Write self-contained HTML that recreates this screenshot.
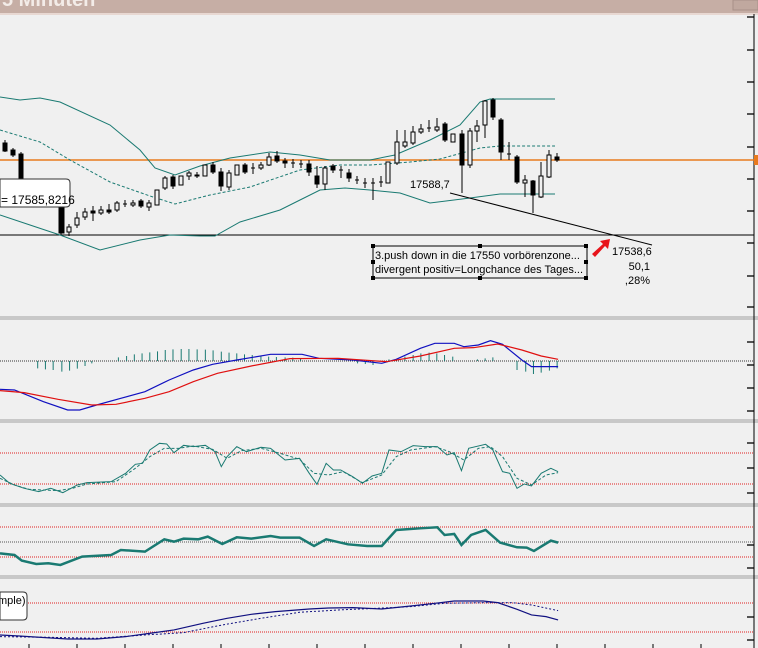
<!DOCTYPE html>
<html><head><meta charset="utf-8"><style>
html,body{margin:0;padding:0;width:758px;height:648px;overflow:hidden;background:#f0f0f0;font-family:"Liberation Sans",sans-serif}
</style></head><body>
<svg width="758" height="648" viewBox="0 0 758 648" xmlns="http://www.w3.org/2000/svg" style="position:absolute;left:0;top:0">
<rect x="0" y="0" width="758" height="648" fill="#f0f0f0"/>
<rect x="0" y="0" width="758" height="14" fill="#c6aea5"/>
<rect x="0" y="13" width="758" height="2" fill="#e8d8d2"/>
<text x="2" y="6" font-size="20" font-weight="bold" fill="#f3ece8" font-family="Liberation Sans">5 Minuten</text>
<rect x="733" y="0" width="25" height="10" fill="#c0a89f" stroke="#a89088"/>
<!-- separators -->
<rect x="0" y="316" width="758" height="4" fill="#c8c8c8"/>
<rect x="0" y="419" width="758" height="4" fill="#c8c8c8"/>
<rect x="0" y="503" width="758" height="4" fill="#c8c8c8"/>
<rect x="0" y="575" width="758" height="4" fill="#c8c8c8"/>
<!-- axis -->
<line x1="754" y1="14" x2="754" y2="648" stroke="#000"/>
<g stroke="#000" stroke-width="1.3">
<line x1="747" y1="17" x2="754" y2="17"/><line x1="747" y1="50" x2="754" y2="50"/><line x1="747" y1="82" x2="754" y2="82"/><line x1="747" y1="114" x2="754" y2="114"/><line x1="747" y1="147" x2="754" y2="147"/><line x1="747" y1="179" x2="754" y2="179"/><line x1="747" y1="211" x2="754" y2="211"/><line x1="747" y1="243" x2="754" y2="243"/><line x1="747" y1="276" x2="754" y2="276"/><line x1="747" y1="307" x2="754" y2="307"/>
<line x1="747" y1="342" x2="754" y2="342"/><line x1="747" y1="365" x2="754" y2="365"/><line x1="747" y1="388" x2="754" y2="388"/><line x1="747" y1="411" x2="754" y2="411"/>
<line x1="747" y1="443" x2="754" y2="443"/><line x1="747" y1="468" x2="754" y2="468"/><line x1="747" y1="493" x2="754" y2="493"/>
<line x1="747" y1="545" x2="754" y2="545"/><line x1="747" y1="568" x2="754" y2="568"/>
<line x1="747" y1="617" x2="754" y2="617"/><line x1="747" y1="640" x2="754" y2="640"/>
</g>
<g stroke="#000"><line x1="29" y1="644" x2="29" y2="648"/><line x1="77" y1="644" x2="77" y2="648"/><line x1="125" y1="644" x2="125" y2="648"/><line x1="173" y1="644" x2="173" y2="648"/><line x1="221" y1="644" x2="221" y2="648"/><line x1="269" y1="644" x2="269" y2="648"/><line x1="317" y1="644" x2="317" y2="648"/><line x1="365" y1="644" x2="365" y2="648"/><line x1="413" y1="644" x2="413" y2="648"/><line x1="461" y1="644" x2="461" y2="648"/><line x1="509" y1="644" x2="509" y2="648"/><line x1="557" y1="644" x2="557" y2="648"/><line x1="605" y1="644" x2="605" y2="648"/><line x1="653" y1="644" x2="653" y2="648"/><line x1="701" y1="644" x2="701" y2="648"/></g>

<!-- main panel lines -->
<line x1="0" y1="160" x2="754" y2="160" stroke="#e87a1e" stroke-width="1.5"/>
<line x1="0" y1="235" x2="754" y2="235" stroke="#000"/>
<polyline fill="none" stroke="#1a7a72" points="0,97 20,100 40,98 60,102 110,125 140,150 155,168 175,175 200,166 230,158 270,152 300,155 330,160 370,160 395,155 430,140 460,125 480,102 490,99 555,99"/>
<polyline fill="none" stroke="#1a7a72" points="0,215 30,225 60,235 100,250 140,240 170,235 200,236 215,236 240,222 280,210 300,200 320,190 345,188 370,190 400,193 430,203 470,198 500,194 555,194"/>
<polyline fill="none" stroke="#1a7a72" stroke-dasharray="3,2" points="0,130 40,142 70,160 110,182 150,196 175,204 210,195 250,187 300,170 340,165 370,165 410,162 440,159 480,148 500,146 555,146"/>

<g stroke="#000" stroke-width="1">
<!-- wicks -->
<line x1="5" y1="140" x2="5" y2="152"/><line x1="13" y1="148" x2="13" y2="157"/><line x1="21" y1="152" x2="21" y2="180"/><line x1="61" y1="205" x2="61" y2="235"/>
<line x1="69" y1="224" x2="69" y2="236"/><line x1="77" y1="212" x2="77" y2="228"/><line x1="85" y1="208" x2="85" y2="220"/><line x1="93" y1="206" x2="93" y2="221"/><line x1="101" y1="206" x2="101" y2="215"/><line x1="109" y1="204" x2="109" y2="214"/><line x1="117" y1="201" x2="117" y2="212"/><line x1="125" y1="200" x2="125" y2="207"/><line x1="133" y1="200" x2="133" y2="207"/><line x1="141" y1="199" x2="141" y2="208"/><line x1="149" y1="200" x2="149" y2="211"/>
<line x1="165" y1="176" x2="165" y2="190"/><line x1="173" y1="175" x2="173" y2="189"/><line x1="189" y1="171" x2="189" y2="180"/><line x1="197" y1="172" x2="197" y2="178"/><line x1="213" y1="162" x2="213" y2="174"/><line x1="221" y1="168" x2="221" y2="191"/><line x1="229" y1="170" x2="229" y2="190"/><line x1="245" y1="163" x2="245" y2="174"/><line x1="253" y1="163" x2="253" y2="174"/><line x1="261" y1="162" x2="261" y2="170"/><line x1="269" y1="153" x2="269" y2="166"/><line x1="277" y1="151" x2="277" y2="163"/><line x1="285" y1="158" x2="285" y2="168"/><line x1="293" y1="159" x2="293" y2="168"/><line x1="301" y1="160" x2="301" y2="168"/><line x1="309" y1="160" x2="309" y2="176"/><line x1="317" y1="166" x2="317" y2="188"/><line x1="325" y1="166" x2="325" y2="190"/><line x1="333" y1="164" x2="333" y2="173"/><line x1="341" y1="166" x2="341" y2="178"/><line x1="349" y1="169" x2="349" y2="182"/><line x1="357" y1="176" x2="357" y2="184"/><line x1="365" y1="178" x2="365" y2="188"/><line x1="373" y1="178" x2="373" y2="200"/><line x1="381" y1="176" x2="381" y2="187"/>
<line x1="397" y1="130" x2="397" y2="165"/><line x1="405" y1="130" x2="405" y2="148"/><line x1="413" y1="126" x2="413" y2="145"/><line x1="421" y1="124" x2="421" y2="134"/><line x1="429" y1="120" x2="429" y2="132"/><line x1="437" y1="118" x2="437" y2="132"/><line x1="445" y1="122" x2="445" y2="142"/><line x1="462" y1="130" x2="462" y2="193"/><line x1="470" y1="128" x2="470" y2="168"/><line x1="477" y1="120" x2="477" y2="142"/><line x1="485" y1="100" x2="485" y2="138"/><line x1="493" y1="98" x2="493" y2="120"/><line x1="501" y1="118" x2="501" y2="160"/><line x1="509" y1="142" x2="509" y2="160"/><line x1="517" y1="155" x2="517" y2="184"/><line x1="525" y1="175" x2="525" y2="197"/><line x1="533" y1="180" x2="533" y2="213"/><line x1="541" y1="162" x2="541" y2="198"/><line x1="549" y1="150" x2="549" y2="178"/><line x1="557" y1="153" x2="557" y2="162"/>
</g>
<g stroke="#000" fill="#000">
<rect x="3" y="143" width="4" height="8"/><rect x="11" y="150" width="4" height="5"/><rect x="19" y="154" width="4" height="25"/><rect x="59" y="207" width="5" height="26"/>
<rect x="91" y="211" width="4" height="2"/><rect x="107" y="210" width="4" height="2"/><rect x="139" y="201" width="4" height="5"/><rect x="171" y="177" width="4" height="9"/><rect x="195" y="175" width="4" height="1"/><rect x="211" y="165" width="4" height="7"/><rect x="219" y="172" width="4" height="14"/><rect x="243" y="165" width="4" height="7"/><rect x="275" y="156" width="4" height="5"/><rect x="283" y="161" width="4" height="2"/><rect x="307" y="164" width="4" height="8"/><rect x="315" y="176" width="4" height="8"/><rect x="331" y="166" width="4" height="4"/><rect x="347" y="173" width="4" height="5"/>
<rect x="443" y="124" width="4" height="16"/><rect x="460" y="134" width="4" height="31"/><rect x="491" y="100" width="4" height="17"/><rect x="499" y="120" width="4" height="32"/><rect x="515" y="157" width="4" height="25"/><rect x="531" y="181" width="4" height="14"/><rect x="555" y="157" width="4" height="3"/>
</g>
<g stroke="#000" fill="#f0f0f0">
<rect x="67" y="227" width="4" height="5"/><rect x="75" y="218" width="4" height="7"/><rect x="83" y="212" width="4" height="5"/><rect x="99" y="210" width="4" height="3"/><rect x="115" y="203" width="4" height="7"/><rect x="131" y="203" width="4" height="2"/><rect x="147" y="203" width="4" height="4"/><rect x="155" y="190" width="4" height="15"/><rect x="163" y="178" width="4" height="10"/><rect x="179" y="176" width="4" height="9"/><rect x="187" y="173" width="4" height="3"/><rect x="203" y="165" width="4" height="11"/><rect x="227" y="173" width="4" height="14"/><rect x="235" y="165" width="4" height="10"/><rect x="259" y="165" width="4" height="3"/><rect x="267" y="157" width="4" height="8"/><rect x="323" y="168" width="4" height="16"/>
<rect x="386" y="162" width="4" height="21"/><rect x="395" y="142" width="4" height="21"/><rect x="403" y="142" width="4" height="4"/><rect x="411" y="132" width="4" height="11"/><rect x="419" y="129" width="4" height="3"/><rect x="435" y="127" width="4" height="3"/><rect x="451" y="134" width="4" height="8"/><rect x="468" y="131" width="4" height="34"/><rect x="475" y="126" width="4" height="5"/><rect x="483" y="101" width="4" height="24"/><rect x="523" y="180" width="4" height="3"/><rect x="539" y="176" width="4" height="21"/><rect x="547" y="155" width="4" height="22"/>
</g>
<g stroke="#000"><line x1="123" y1="204" x2="127" y2="204"/><line x1="251" y1="168" x2="255" y2="168"/><line x1="291" y1="163" x2="295" y2="163"/><line x1="299" y1="164" x2="303" y2="164"/><line x1="339" y1="170" x2="343" y2="170"/><line x1="355" y1="180" x2="359" y2="180"/><line x1="363" y1="183" x2="367" y2="183"/><line x1="371" y1="183" x2="375" y2="183"/><line x1="379" y1="182" x2="383" y2="182"/><line x1="427" y1="128" x2="431" y2="128"/><line x1="507" y1="154" x2="511" y2="154"/></g>

<!-- tooltip -->
<path d="M0,179 L66,179 Q70,179 70,183 L70,203 Q70,207 66,207 L0,207 Z" fill="#fff" stroke="#333"/>
<text x="1" y="204" font-size="12" fill="#000">= 17585,8216</text>
<!-- trendline and labels -->
<line x1="450" y1="193" x2="652" y2="245" stroke="#000"/>
<text x="410" y="188" font-size="11" fill="#000">17588,7</text>
<rect x="373" y="246" width="214" height="32" fill="none" stroke="#000"/>
<g fill="#000"><rect x="371" y="244" width="4" height="4"/><rect x="478" y="244" width="4" height="4"/><rect x="584" y="244" width="4" height="4"/><rect x="371" y="260" width="4" height="4"/><rect x="584" y="260" width="4" height="4"/><rect x="371" y="276" width="4" height="4"/><rect x="478" y="276" width="4" height="4"/><rect x="584" y="276" width="4" height="4"/></g>
<text x="375" y="259" font-size="11" fill="#000">3.push down in die 17550 vorbörenzone...</text>
<text x="375" y="273" font-size="11" fill="#000">divergent positiv=Longchance des Tages...</text>
<path d="M592,254 L603,244 L600,241 L610,239 L608,249 L605,246 L595,257 Z" fill="#e8151b"/>
<text x="612" y="255" font-size="11" fill="#000">17538,6</text>
<text x="650" y="270" font-size="11" fill="#000" text-anchor="end">50,1</text>
<text x="650" y="284" font-size="11" fill="#000" text-anchor="end">,28%</text>
<rect x="754" y="155" width="4" height="10" fill="#e87a1e"/>

<!-- lower panels using zoom coords -->
<line x1="0" y1="361" x2="754" y2="361" stroke="#333" stroke-dasharray="1,1"/>
<g stroke="#e02020" stroke-dasharray="1,1"><line x1="0" y1="453" x2="754" y2="453"/><line x1="0" y1="484" x2="754" y2="484"/><line x1="0" y1="527" x2="754" y2="527"/><line x1="0" y1="557" x2="754" y2="557"/><line x1="0" y1="603" x2="754" y2="603"/><line x1="0" y1="632" x2="754" y2="632"/></g>
<line x1="0" y1="542" x2="754" y2="542" stroke="#555" stroke-dasharray="1,1"/>
<g transform="translate(0,300) scale(0.4832,0.3333)">
<g stroke="#1a7a72" stroke-width="1" vector-effect="non-scaling-stroke">
<path vector-effect="non-scaling-stroke" d="M78,183V205M94,183V208M110,183V210M128,183V215M144,183V212M160,183V206M176,183V198M190,183V190M245,183V172M262,183V168M278,183V163M294,183V160M310,183V157M326,183V154M342,183V150M358,183V148M375,183V147M391,183V147M408,183V148M425,183V149M441,183V151M458,183V155M474,183V158M490,183V160M506,183V163M522,183V165M540,183V168M556,183V170M572,183V171M590,183V172M606,183V173M622,183V175M740,183V190M756,183V192M772,183V195M805,183V178M838,183V170M855,183V165M871,183V160M888,183V158M904,183V160M920,183V165M937,183V170M988,183V178M1004,183V175M1020,183V172M1070,183V210M1088,183V215M1104,183V222M1120,183V218M1137,183V212M1153,183V205"/>
</g>
<polyline vector-effect="non-scaling-stroke" fill="none" stroke="#1010c0" stroke-width="1.2" points="0,268 30,270 90,305 140,330 165,330 200,315 250,295 300,275 350,240 400,210 440,193 490,180 560,163 625,163 660,175 730,180 790,190 820,178 870,145 900,130 940,130 960,140 990,135 1015,122 1040,133 1080,180 1100,200 1125,200 1155,200"/>
<polyline vector-effect="non-scaling-stroke" fill="none" stroke="#e01010" stroke-width="1.2" points="0,272 50,278 120,298 190,315 240,313 300,295 350,275 400,245 450,220 520,198 600,176 700,175 800,185 870,168 940,145 980,143 1030,132 1080,150 1120,168 1155,178"/>
<polyline vector-effect="non-scaling-stroke" fill="none" stroke="#1a7a72" points="0,525 20,550 50,565 80,575 105,565 130,578 160,555 180,548 230,545 260,520 280,493 295,490 310,450 330,430 345,432 360,458 380,436 400,440 425,436 445,455 458,500 470,470 490,440 510,455 540,442 560,445 590,480 620,475 640,520 656,553 675,490 690,510 705,510 730,530 750,550 770,528 790,520 805,450 830,455 855,437 880,440 905,440 925,465 940,458 955,512 970,445 1005,433 1020,450 1040,515 1055,520 1070,565 1085,552 1100,558 1120,520 1140,505 1155,515"/>
<polyline vector-effect="non-scaling-stroke" fill="none" stroke="#1a7a72" stroke-dasharray="3,2" points="0,535 30,555 60,568 90,570 120,572 150,565 180,552 240,545 280,505 310,470 340,445 370,445 400,438 440,448 470,475 500,452 540,445 580,460 620,478 650,520 680,525 710,515 750,548 790,525 820,470 850,450 900,440 930,455 960,480 990,445 1015,440 1040,470 1070,535 1100,555 1130,525 1155,518"/>
<polyline vector-effect="non-scaling-stroke" fill="none" stroke="#1a7a72" stroke-width="2.5" points="0,760 30,765 45,782 75,792 100,790 125,795 170,770 230,765 250,750 300,755 340,718 360,725 380,716 410,718 430,710 460,732 490,712 520,716 560,708 580,713 620,713 650,738 675,718 720,733 760,738 790,738 820,690 870,685 905,682 920,705 940,702 955,735 975,705 1005,690 1035,728 1070,742 1090,743 1105,753 1140,722 1155,728"/>
<polyline vector-effect="non-scaling-stroke" fill="none" stroke="#101080" stroke-width="1.2" points="0,1005 40,1008 60,1010 140,1017 200,1017 260,1010 320,998 360,990 420,970 470,955 520,943 570,935 640,927 680,924 730,923 790,927 850,918 900,910 940,903 1000,903 1030,908 1070,928 1100,945 1130,950 1155,960"/>
<polyline vector-effect="non-scaling-stroke" fill="none" stroke="#101080" stroke-dasharray="2,2" points="0,1010 100,1012 200,1015 300,1005 380,998 460,975 540,955 620,937 700,930 780,925 850,920 920,910 1000,908 1060,908 1100,915 1155,932"/>
</g>
<path d="M0,592 L23,592 Q27,592 27,596 L27,616 Q27,620 23,620 L0,620 Z" fill="#fff" stroke="#333"/>
<text x="-2" y="604" font-size="11" fill="#000">mple)</text>
</svg>
</body></html>
